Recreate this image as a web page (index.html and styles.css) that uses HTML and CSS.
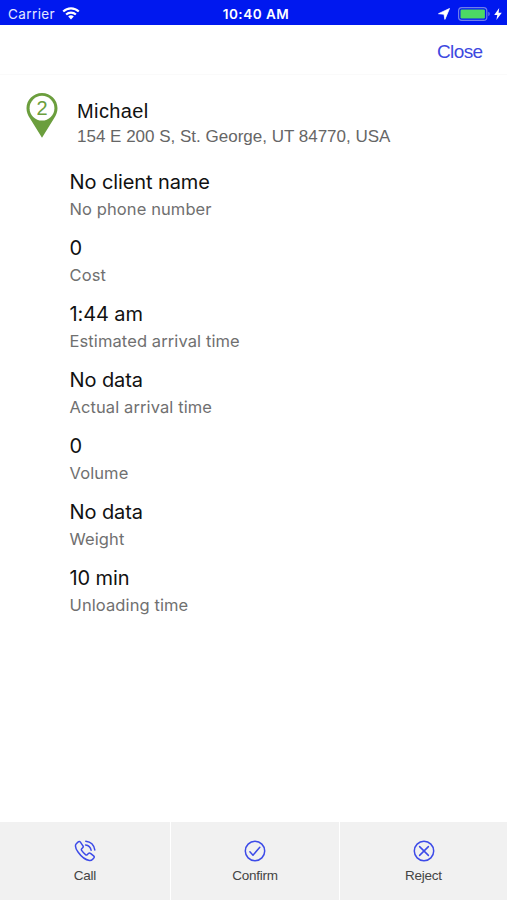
FILE: index.html
```html
<!DOCTYPE html>
<html lang="en">
<head>
<meta charset="utf-8">
<meta name="viewport" content="width=device-width, initial-scale=1">
<title>Stop details</title>
<link rel="stylesheet" href="styles.css">
</head>
<body>
<div class="screen">
  <header class="status">
    <div class="status-left">
      <span class="carrier">Carrier</span>
      <svg class="wifi" width="18" height="13" viewBox="0 0 18 13" fill="none" stroke="#fff" stroke-width="2.1"><path d="M1.2 4.6a11 11 0 0 1 15.6 0M4.1 7.6a7 7 0 0 1 9.8 0"/><path d="M6.2 9.6a4 4 0 0 1 5.6 0L9 12.5z" fill="#fff" stroke="none"/></svg>
    </div>
    <span class="clock">10:40 AM</span>
    <div class="status-right">
      <svg width="12" height="12" viewBox="0 0 12 12" fill="#fff" stroke="#fff" stroke-width=".8" stroke-linejoin="round"><path d="M11.5.5 6.9 11.4 6 6.200.500 5.700z"/></svg>
      <svg width="33" height="14" viewBox="0 0 33 14"><rect x=".6" y=".6" width="28.2" height="12.8" rx="3.2" fill="none" stroke="#6f7fe9" stroke-width="1.2"/><rect x="2.5" y="2.5" width="24.4" height="9" rx="1.2" fill="#4cd964"/><path d="M30.3 4.8a2.4 2.4 0 0 1 0 4.4z" fill="#6f7fe9"/></svg>
      <svg class="bolt" width="8" height="12" viewBox="0 0 8 12" fill="#fff"><path d="M5.2 0 .2 7h3.100L2.400 12 7.800 4.800H4.600z"/></svg>
    </div>
  </header>
  <nav class="nav"><a class="close">Close</a></nav>
  <main class="content">
    <section class="stop">
      <svg class="pin" width="32" height="46" viewBox="0 0 32 46"><path d="M16 0C7.300 0 .5 6.900.5 15.300c0 3.700 1.400 7 3.400 10L16 44.800l12.100-19.500c2-3 3.400-6.300 3.400-10C31.500 6.900 24.700 0 16 0z" fill="#6b9e3d"/><circle cx="16" cy="15.200" r="12.400" fill="#fff"/><text class="pin-number" x="16" y="22.300" text-anchor="middle">2</text></svg>
      <div>
        <div class="name">Michael</div>
        <div class="address">154 E 200 S, St. George, UT 84770, USA</div>
      </div>
    </section>
    <dl class="details">
      <div class="row"><dt>No client name</dt><dd>No phone number</dd></div>
      <div class="row"><dt>0</dt><dd>Cost</dd></div>
      <div class="row"><dt>1:44 am</dt><dd>Estimated arrival time</dd></div>
      <div class="row"><dt>No data</dt><dd>Actual arrival time</dd></div>
      <div class="row"><dt>0</dt><dd>Volume</dd></div>
      <div class="row"><dt>No data</dt><dd>Weight</dd></div>
      <div class="row"><dt>10 min</dt><dd>Unloading time</dd></div>
    </dl>
  </main>
  <footer class="actions">
    <button class="action">
      <svg class="icon" viewBox="0 0 22 22"><path d="M4.200 1.900 2.300 3.700C.9 5.200 1.500 8.500 4.200 12.300c3.200 4.500 7.600 7.700 11.300 8.200 1.500.2 2.400-.4 3.200-1.300l1.100-1.200c.6-.7.5-1.500-.2-2.100l-3.100-2.500c-.7-.6-1.500-.5-2.100.1l-1.200 1.200c-.5.5-1.100.4-1.700-.1-1.600-1.200-2.800-2.600-3.900-4.200-.4-.6-.4-1.100.1-1.600l1-1c.6-.6.7-1.300.2-2L6.400 2.100c-.6-.8-1.500-.9-2.200-.2zM11.600 4.900c3 .4 4.900 2.300 5.500 5.300M11.800 1.200c5 .5 8.200 3.900 9 8.700"/></svg>
      <span>Call</span>
    </button>
    <button class="action">
      <svg class="icon" viewBox="0 0 22 22"><circle cx="11" cy="11" r="9.700"/><path d="m5.900 11.800 3.100 3.400 6.800-8"/></svg>
      <span>Confirm</span>
    </button>
    <button class="action">
      <svg class="icon" viewBox="0 0 22 22"><circle cx="11" cy="11" r="9.700"/><path d="m6.600 6.600 8.800 8.800m0-8.800-8.800 8.800"/></svg>
      <span>Reject</span>
    </button>
  </footer>
</div>
</body>
</html>
```
FILE: styles.css
```css
* { box-sizing: border-box; }
body { margin: 0; background: #fff; font-family: Inter, "Liberation Sans", sans-serif; }
.screen { height: 900px; display: flex; flex-direction: column; }
.status { height: 25px; flex: none; display: grid; grid-template-columns: 1fr auto 1fr; align-items: center; padding: 2px 5px 0 8px; background: #0018ef; color: #fff; font-size: 13.5px; line-height: 22px; }
.status-left, .status-right { display: flex; align-items: center; }
.status-left { gap: 7px; }
.carrier { letter-spacing: .4px; color: #e3e7ff; }
.clock { position: relative; left: 1px; font-weight: 600; letter-spacing: .5px; }
.status-right { justify-content: flex-end; gap: 8px; }
.bolt { margin-left: -5px; }
.nav { height: 50px; flex: none; display: flex; justify-content: flex-end; align-items: center; padding: 4px 24.5px 0 0; border-bottom: 1px solid #fafafa; }
.close { color: #3d48df; font: 19px/24px "Liberation Sans", Arial, sans-serif; letter-spacing: -.6px; }
.content { flex: 1; padding: 18px 20px 0 26px; }
.stop { display: flex; gap: 19px; height: 74px; }
.pin { flex: none; }
.pin-number { font: 20px "Liberation Sans", Arial, sans-serif; fill: #6b9e3d; }
.name { margin-top: 5px; font: 20px/26px "Liberation Sans", Arial, sans-serif; color: #111; letter-spacing: .4px; }
.address { font: 17px/25px "Liberation Sans", Arial, sans-serif; color: #666; letter-spacing: 0; }
.details { margin: 0 0 0 43.5px; }
.row { height: 66px; }
dt { padding-top: 1px; font-size: 20px; line-height: 29px; letter-spacing: -.1px; color: #111; }
dd { margin: 0; font-size: 16.5px; line-height: 24px; letter-spacing: .1px; color: #707070; }
.actions { height: 78px; flex: none; display: grid; grid-template-columns: 170px 168px 1fr; gap: 1px; }
.action { display: flex; flex-direction: column; align-items: center; border: 0; margin: 0; padding: 18px 0 0; background: #f1f1f1; color: #444; font: 13.5px/18px "Liberation Sans", Arial, sans-serif; letter-spacing: -.25px; }
.icon { width: 22px; height: 22px; margin-bottom: 5px; fill: none; stroke: #3d4be8; stroke-width: 1.5; stroke-linecap: round; stroke-linejoin: round; }
```
